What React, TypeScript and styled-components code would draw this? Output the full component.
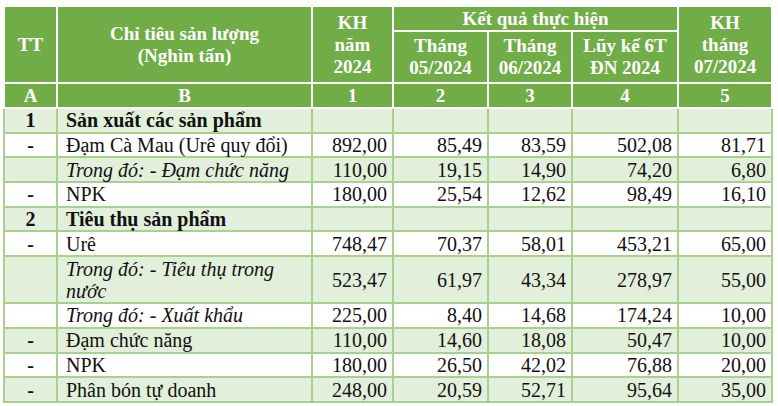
import React from 'react';
import styled, { createGlobalStyle } from 'styled-components';

const GlobalStyle = createGlobalStyle`
  html, body {
    margin: 0;
    padding: 0;
    background: #fff;
  }
  body {
    font-family: "Liberation Serif", "Times New Roman", serif;
  }
`;

const Page = styled.div`
  padding: 5px 0 0 3px;
`;

const Table = styled.table`
  border-collapse: collapse;
  table-layout: fixed;
  width: 770px;
  font-size: 20px;
  color: #111;
`;

const Head = styled.th<{ $h?: number }>`
  background: #70ad47;
  color: #fff;
  font-size: 19px;
  font-weight: bold;
  text-align: center;
  border: 2px solid #fff;
  padding: 0 2px;
  line-height: 22px;
  height: ${({ $h }) => ($h ? `${$h}px` : 'auto')};
`;

const Row = styled.tr<{ $alt?: boolean; $h?: number }>`
  background: ${({ $alt }) => ($alt ? '#e2efda' : '#fff')};
  height: ${({ $h }) => $h ?? 24.7}px;
`;

const Cell = styled.td<{ $align?: 'left' | 'center' | 'right'; $bold?: boolean; $italic?: boolean }>`
  border: 2px solid #a9d18e;
  text-align: ${({ $align }) => $align ?? 'right'};
  font-weight: ${({ $bold }) => ($bold ? 'bold' : 'normal')};
  font-style: ${({ $italic }) => ($italic ? 'italic' : 'normal')};
  padding: 0 5px;
  line-height: 22px;
  vertical-align: middle;
`;

const Label = styled(Cell)`
  padding: 0 4px 0 8px;
`;

type Line = {
  tt: string;
  name: string;
  kind?: 'group' | 'sub';
  values: string[];
  h?: number;
};

const lines: Line[] = [
  { tt: '1', name: 'Sản xuất các sản phẩm', kind: 'group', values: ['', '', '', '', ''] },
  { tt: '-', name: 'Đạm Cà Mau (Urê quy đổi)', values: ['892,00', '85,49', '83,59', '502,08', '81,71'] },
  { tt: '', name: 'Trong đó: - Đạm chức năng', kind: 'sub', values: ['110,00', '19,15', '14,90', '74,20', '6,80'] },
  { tt: '-', name: 'NPK', values: ['180,00', '25,54', '12,62', '98,49', '16,10'] },
  { tt: '2', name: 'Tiêu thụ sản phẩm', kind: 'group', values: ['', '', '', '', ''] },
  { tt: '-', name: 'Urê', values: ['748,47', '70,37', '58,01', '453,21', '65,00'] },
  { tt: '', name: 'Trong đó: - Tiêu thụ trong nước', kind: 'sub', values: ['523,47', '61,97', '43,34', '278,97', '55,00'], h: 47 },
  { tt: '', name: 'Trong đó: - Xuất khẩu', kind: 'sub', values: ['225,00', '8,40', '14,68', '174,24', '10,00'] },
  { tt: '-', name: 'Đạm chức năng', values: ['110,00', '14,60', '18,08', '50,47', '10,00'] },
  { tt: '-', name: 'NPK', values: ['180,00', '26,50', '42,02', '76,88', '20,00'] },
  { tt: '-', name: 'Phân bón tự doanh', values: ['248,00', '20,59', '52,71', '95,64', '35,00'] },
];

const widths = [53, 255, 81, 95, 84, 106, 94];

export default function App() {
  return (
    <>
      <GlobalStyle />
      <Page>
        <Table>
          <colgroup>
            {widths.map((w, i) => (
              <col key={i} style={{ width: w }} />
            ))}
          </colgroup>
          <thead>
            <tr>
              <Head rowSpan={2}>TT</Head>
              <Head rowSpan={2}>
                Chỉ tiêu sản lượng
                <br />
                (Nghìn tấn)
              </Head>
              <Head rowSpan={2}>
                KH
                <br />
                năm
                <br />
                2024
              </Head>
              <Head colSpan={3} $h={23}>
                Kết quả thực hiện
              </Head>
              <Head rowSpan={2}>
                KH
                <br />
                tháng
                <br />
                07/2024
              </Head>
            </tr>
            <tr>
              <Head $h={50}>
                Tháng
                <br />
                05/2024
              </Head>
              <Head>
                Tháng
                <br />
                06/2024
              </Head>
              <Head>
                Lũy kế 6T
                <br />
                ĐN 2024
              </Head>
            </tr>
            <tr>
              {['A', 'B', '1', '2', '3', '4', '5'].map((c) => (
                <Head key={c} $h={23}>
                  {c}
                </Head>
              ))}
            </tr>
          </thead>
          <tbody>
            {lines.map((l, i) => (
              <Row key={i} $alt={i % 2 === 0} $h={l.h}>
                <Cell $align="center" $bold>
                  {l.tt}
                </Cell>
                <Label $align="left" $bold={l.kind === 'group'} $italic={l.kind === 'sub'}>
                  {l.name}
                </Label>
                {l.values.map((v, j) => (
                  <Cell key={j}>{v}</Cell>
                ))}
              </Row>
            ))}
          </tbody>
        </Table>
      </Page>
    </>
  );
}
